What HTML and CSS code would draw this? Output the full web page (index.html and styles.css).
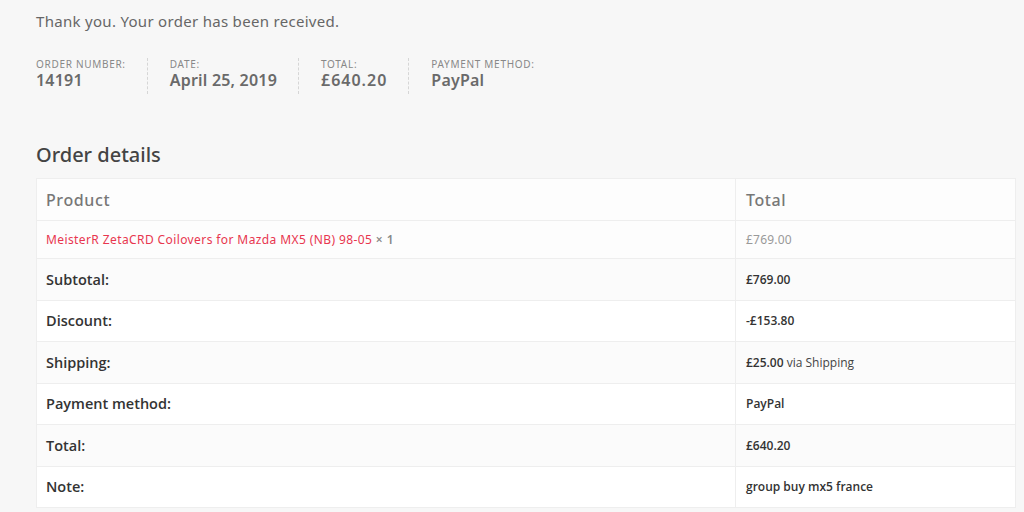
FILE: index.html
```html
<!DOCTYPE html>
<html>
<head>
<meta charset="utf-8">
<link rel="stylesheet" href="styles.css">
</head>
<body>
<div class="page">
  <p class="thanks">Thank you. Your order has been received.</p>
  <ul class="overview">
    <li class="ov-item"><span class="ov-label">Order number:</span><strong class="ov-value">14191</strong></li>
    <li class="ov-item"><span class="ov-label">Date:</span><strong class="ov-value">April 25, 2019</strong></li>
    <li class="ov-item"><span class="ov-label">Total:</span><strong class="ov-value wide">£640.20</strong></li>
    <li class="ov-item"><span class="ov-label">Payment method:</span><strong class="ov-value">PayPal</strong></li>
  </ul>
  <h2 class="details-title">Order details</h2>
  <table class="order-table">
    <thead>
      <tr class="head-row">
        <th class="col-product">Product</th>
        <th class="col-total">Total</th>
      </tr>
    </thead>
    <tbody>
      <tr class="item-row">
        <td class="product-name"><a href="#" class="product-link">MeisterR ZetaCRD Coilovers for Mazda MX5 (NB) 98-05</a> <span class="qty">× 1</span></td>
        <td class="product-total">£769.00</td>
      </tr>
    </tbody>
    <tfoot>
      <tr class="foot-row odd"><th>Subtotal:</th><td><b>£769.00</b></td></tr>
      <tr class="foot-row"><th>Discount:</th><td><b>-£153.80</b></td></tr>
      <tr class="foot-row odd"><th>Shipping:</th><td><b>£25.00</b> <span class="via">via Shipping</span></td></tr>
      <tr class="foot-row"><th>Payment method:</th><td><b>PayPal</b></td></tr>
      <tr class="foot-row odd"><th>Total:</th><td><b>£640.20</b></td></tr>
      <tr class="foot-row"><th>Note:</th><td><b>group buy mx5 france</b></td></tr>
    </tfoot>
  </table>
</div>
</body>
</html>
```

FILE: styles.css
```css
html, body {
  margin: 0;
  padding: 0;
  background: #f7f7f7;
}

.page {
  padding: 10px 0 0 36px;
  width: 980px;
  font-family: "Open Sans", "Liberation Sans", sans-serif;
  color: #555;
}

.thanks {
  margin: 0;
  font-family: "Noto Sans", "Open Sans", sans-serif;
  font-size: 15px;
  line-height: 22px;
  letter-spacing: 0.3px;
  color: #666;
}

.overview {
  list-style: none;
  margin: 26px 0 0 0;
  padding: 0;
  display: flex;
}

.ov-item {
  display: flex;
  flex-direction: column;
  padding: 0 21px 0 22px;
  border-right: 1px dashed #d6d6d6;
  height: 36px;
}

.ov-item:first-child {
  padding-left: 0;
}

.ov-item:last-child {
  border-right: none;
}

.ov-label {
  font-family: "Noto Sans", "Open Sans", sans-serif;
  text-transform: uppercase;
  font-size: 10px;
  line-height: 12px;
  letter-spacing: 0.7px;
  color: #888;
}

.ov-value {
  font-family: "Noto Sans", "Open Sans", sans-serif;
  font-weight: 600;
  font-size: 16px;
  line-height: 20px;
  letter-spacing: 0.2px;
  color: #6a6a6a;
}

.ov-value.wide {
  letter-spacing: 1px;
}

.details-title {
  margin: 47px 0 0 0;
  font-family: "Noto Sans", "Open Sans", sans-serif;
  font-weight: 500;
  font-size: 20px;
  line-height: 28px;
  color: #444;
}

.order-table {
  margin-top: 9px;
  width: 980px;
  border-collapse: collapse;
  border: 1px solid #eeeeee;
}

.order-table th,
.order-table td {
  border: 1px solid #eeeeee;
  text-align: left;
  padding: 0 10px 0 9px;
}

.order-table tr > :last-child {
  padding-left: 10px;
}

.head-row {
  background: #fdfdfd;
  height: 42px;
}

.head-row th {
  font-family: "Noto Sans", "Open Sans", sans-serif;
  font-weight: 500;
  font-size: 16px;
  letter-spacing: 0.6px;
  color: #777;
}

.col-product {
  width: 679px;
}

.item-row {
  background: #fdfdfd;
  height: 38px;
}

.product-name {
  font-family: "Noto Sans", "Open Sans", sans-serif;
  font-size: 12px;
  letter-spacing: 0.4px;
}

.product-link {
  color: #e8364f;
  text-decoration: none;
}

.qty {
  color: #888;
  font-weight: 600;
}

.product-total {
  font-family: "Noto Sans", "Open Sans", sans-serif;
  font-size: 12px;
  letter-spacing: 0.2px;
  color: #999;
}

.foot-row {
  background: #ffffff;
  height: 41.5px;
}

.foot-row.odd {
  background: #fbfbfb;
}

.foot-row th {
  font-family: "Open Sans", sans-serif;
  font-weight: 600;
  font-size: 14.5px;
  color: #333;
}

.foot-row td {
  font-family: "Open Sans", sans-serif;
  font-size: 12px;
  color: #333;
}

.foot-row td b {
  font-weight: 600;
}

.via {
  color: #444;
}
```
